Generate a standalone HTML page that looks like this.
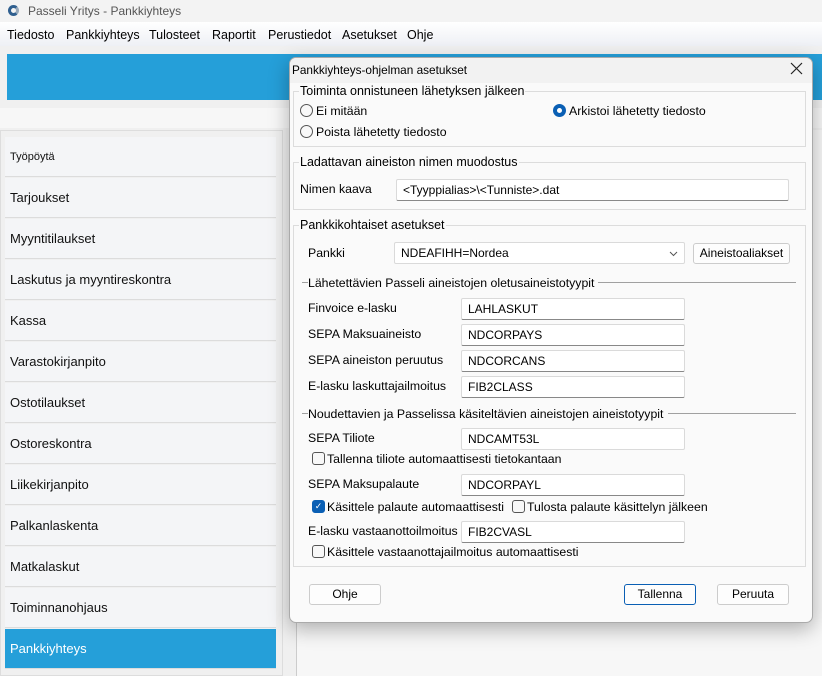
<!DOCTYPE html>
<html><head><meta charset="utf-8"><style>
*{box-sizing:border-box;margin:0;padding:0}
body{width:822px;height:676px;overflow:hidden;background:#f0f0f0;font-family:"Liberation Sans",sans-serif;position:relative;color:#000}
.a{position:absolute}
.t{position:absolute;font-size:12.3px;white-space:nowrap}
.m{position:absolute;top:28px;font-size:12.5px;white-space:nowrap}
.side{position:absolute;left:5px;width:271px;height:40px;background:#f4f5f7;border-bottom:1px solid #dcdcdc;font-size:13px;line-height:40px;padding-left:5px;color:#111}
.inp{position:absolute;height:22px;background:#fff;border:1px solid #dadada;border-bottom:1px solid #888;border-radius:2px;font-size:12px;line-height:20px;padding-left:6px}
.grp{position:absolute;border:1px solid #dcdcdc;left:293px;width:513px}
.leg{position:absolute;top:-8px;left:5px;background:#fafafa;padding:0 1px;font-size:12.5px}
.cb{position:absolute;width:13px;height:13px;border:1px solid #555;border-radius:3px;background:#f8f8f8}
.rb{position:absolute;width:13px;height:13px;border:1px solid #555;border-radius:50%;background:#f8f8f8}
.btn{position:absolute;height:21px;border:1px solid #ccc;border-radius:3px;background:#fdfdfd;font-size:12px;text-align:center;line-height:19px}
.ln{position:absolute;height:1px;background:#a0a0a0}
</style></head><body>
<div class="a" style="left:0;top:0;width:822px;height:22px;background:#f3f3f3"></div>
<div class="a" style="left:8px;top:5px;width:11px;height:11px;border-radius:50%;border:3px solid #2f5f8f;border-right-color:#9ab"></div>
<div class="t" style="left:28px;top:4px;color:#555;font-size:12px">Passeli Yritys - Pankkiyhteys</div>
<div class="a" style="left:0;top:22px;width:822px;height:24px;background:linear-gradient(#fff,#eef0f5)"></div>
<div class="m" style="left:7px">Tiedosto</div>
<div class="m" style="left:66px">Pankkiyhteys</div>
<div class="m" style="left:149px">Tulosteet</div>
<div class="m" style="left:212px">Raportit</div>
<div class="m" style="left:268px">Perustiedot</div>
<div class="m" style="left:342px">Asetukset</div>
<div class="m" style="left:407px">Ohje</div>
<div class="a" style="left:7px;top:54px;width:815px;height:46px;background:#259fd9"></div>
<div class="a" style="left:0;top:108px;width:822px;height:20px;background:#f7f7f7"></div>
<div class="a" style="left:0;top:130px;width:283px;height:546px;background:#f0f0f0;border:1px solid #ddd"></div>
<div class="a" style="left:296px;top:130px;width:526px;height:546px;background:#f7f7f7;border-left:1px solid #ccc"></div>
<div class="side" style="top:137px;font-size:11px">Työpöytä</div>
<div class="side" style="top:178px">Tarjoukset</div>
<div class="side" style="top:219px">Myyntitilaukset</div>
<div class="side" style="top:260px">Laskutus ja myyntireskontra</div>
<div class="side" style="top:301px">Kassa</div>
<div class="side" style="top:342px">Varastokirjanpito</div>
<div class="side" style="top:383px">Ostotilaukset</div>
<div class="side" style="top:424px">Ostoreskontra</div>
<div class="side" style="top:465px">Liikekirjanpito</div>
<div class="side" style="top:506px">Palkanlaskenta</div>
<div class="side" style="top:547px">Matkalaskut</div>
<div class="side" style="top:588px">Toiminnanohjaus</div>
<div class="side" style="top:629px;background:#259fd9;color:#fff">Pankkiyhteys</div>

<div class="a" style="left:289px;top:57px;width:524px;height:566px;background:#fafafa;border:1px solid #aaa;border-radius:7px;box-shadow:0 6px 20px rgba(0,0,0,.3);overflow:hidden">
<div class="a" style="left:0;top:0;width:524px;height:25px;background:#f2f2f2"></div>
</div>
<div class="t" style="left:292px;top:63px;font-size:11.8px">Pankkiyhteys-ohjelman asetukset</div>
<svg class="a" style="left:790px;top:62px" width="13" height="13"><path d="M1 1L12 12M12 1L1 12" stroke="#222" stroke-width="1.2"/></svg>

<div class="grp" style="top:91px;height:56px"><div class="leg">Toiminta onnistuneen lähetyksen jälkeen</div></div>
<div class="rb" style="left:300px;top:104px"></div><div class="t" style="left:316px;top:104px">Ei mitään</div>
<div class="rb" style="left:553px;top:104px;border:4px solid #0a5fb4;background:#fff"></div><div class="t" style="left:569px;top:104px">Arkistoi lähetetty tiedosto</div>
<div class="rb" style="left:300px;top:125px"></div><div class="t" style="left:316px;top:125px">Poista lähetetty tiedosto</div>

<div class="grp" style="top:162px;height:48px"><div class="leg">Ladattavan aineiston nimen muodostus</div></div>
<div class="t" style="left:300px;top:182px">Nimen kaava</div>
<div class="inp" style="left:396px;top:179px;width:393px">&lt;Tyyppialias&gt;\&lt;Tunniste&gt;.dat</div>

<div class="grp" style="top:225px;height:342px"><div class="leg">Pankkikohtaiset asetukset</div></div>
<div class="t" style="left:308px;top:246px">Pankki</div>
<div class="inp" style="left:394px;top:242px;width:291px;border-bottom-color:#dadada">NDEAFIHH=Nordea<svg style="position:absolute;right:6px;top:8px" width="9" height="6"><path d="M1 1L4.5 4.5L8 1" stroke="#555" fill="none"/></svg></div>
<div class="btn" style="left:693px;top:243px;width:97px">Aineistoaliakset</div>
<div class="ln" style="left:302px;top:282px;width:6px"></div>
<div class="t" style="left:308px;top:276px">Lähetettävien Passeli aineistojen oletusaineistotyypit</div>
<div class="ln" style="left:598px;top:282px;width:198px"></div>
<div class="t" style="left:308px;top:301px">Finvoice e-lasku</div><div class="inp" style="left:461px;top:298px;width:224px">LAHLASKUT</div>
<div class="t" style="left:308px;top:327px">SEPA Maksuaineisto</div><div class="inp" style="left:461px;top:324px;width:224px">NDCORPAYS</div>
<div class="t" style="left:308px;top:353px">SEPA aineiston peruutus</div><div class="inp" style="left:461px;top:350px;width:224px">NDCORCANS</div>
<div class="t" style="left:308px;top:379px">E-lasku laskuttajailmoitus</div><div class="inp" style="left:461px;top:376px;width:224px">FIB2CLASS</div>
<div class="ln" style="left:302px;top:413px;width:6px"></div>
<div class="t" style="left:308px;top:407px">Noudettavien ja Passelissa käsiteltävien aineistojen aineistotyypit</div>
<div class="ln" style="left:668px;top:413px;width:128px"></div>
<div class="t" style="left:308px;top:431px">SEPA Tiliote</div><div class="inp" style="left:461px;top:428px;width:224px;border-bottom-color:#dadada">NDCAMT53L</div>
<div class="cb" style="left:312px;top:452px"></div><div class="t" style="left:327px;top:452px">Tallenna tiliote automaattisesti tietokantaan</div>
<div class="t" style="left:308px;top:477px">SEPA Maksupalaute</div><div class="inp" style="left:461px;top:474px;width:224px">NDCORPAYL</div>
<div class="cb" style="left:312px;top:500px;background:#0a5fb4;border-color:#0a5fb4;color:#fff;font-size:9px;line-height:11px;text-align:center">✓</div><div class="t" style="left:327px;top:500px">Käsittele palaute automaattisesti</div>
<div class="cb" style="left:512px;top:500px"></div><div class="t" style="left:527px;top:500px">Tulosta palaute käsittelyn jälkeen</div>
<div class="t" style="left:308px;top:524px">E-lasku vastaanottoilmoitus</div><div class="inp" style="left:461px;top:521px;width:224px">FIB2CVASL</div>
<div class="cb" style="left:312px;top:545px"></div><div class="t" style="left:327px;top:545px">Käsittele vastaanottajailmoitus automaattisesti</div>

<div class="btn" style="left:309px;top:584px;width:72px">Ohje</div>
<div class="btn" style="left:624px;top:584px;width:72px;border-color:#0a5fb4">Tallenna</div>
<div class="btn" style="left:717px;top:584px;width:72px">Peruuta</div>
</body></html>
